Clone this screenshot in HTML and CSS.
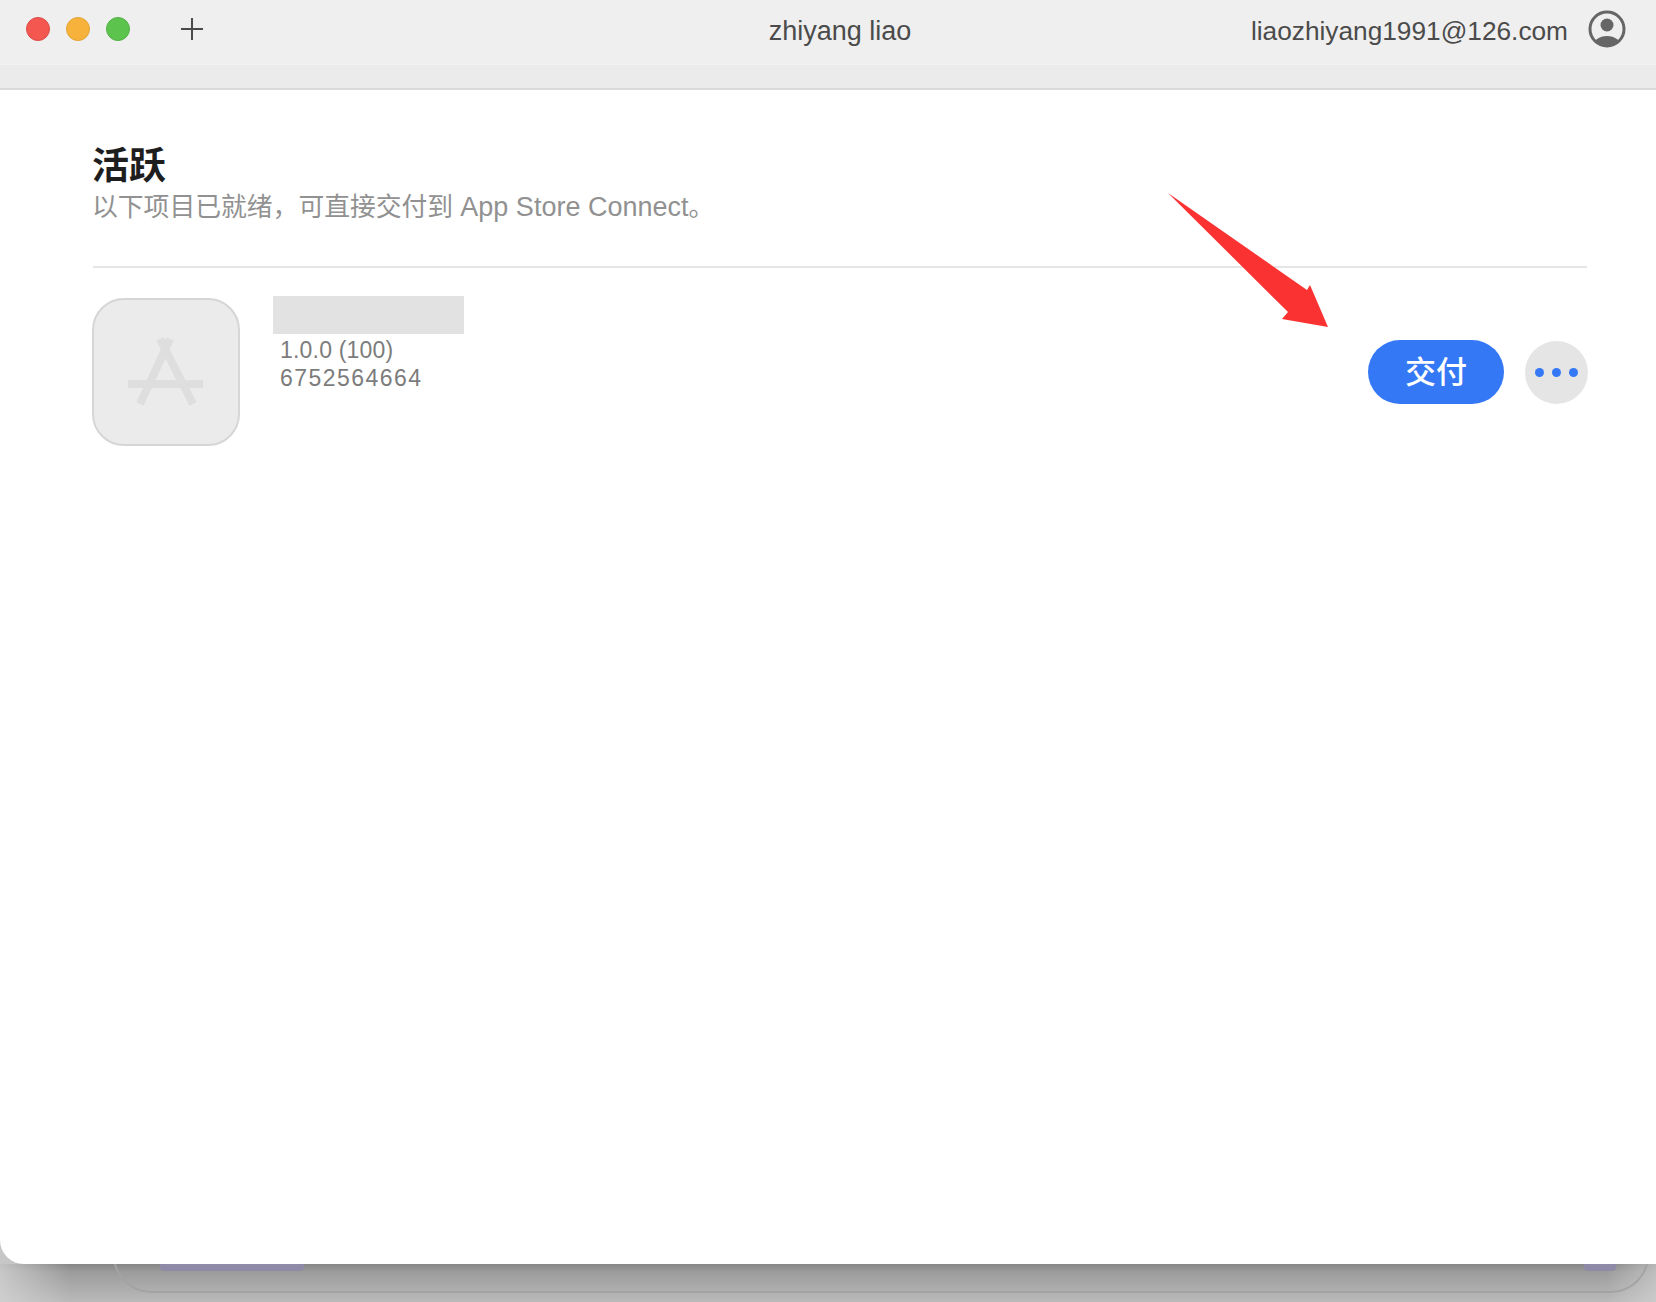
FILE: index.html
```html
<!DOCTYPE html>
<html lang="zh">
<head>
<meta charset="utf-8">
<title>zhiyang liao</title>
<link rel="stylesheet" href="styles.css">
</head>
<body>
<div class="screen">
  <main class="window">
    <header class="titlebar">
      <div class="title-left">
        <div class="lights">
          <span class="light light-red"></span>
          <span class="light light-yellow"></span>
          <span class="light light-green"></span>
        </div>
        <svg class="plus" viewBox="0 0 24 24" width="24" height="24"><path d="M12 1v22M1 12h22"/></svg>
      </div>
      <div class="title-name">zhiyang liao</div>
      <div class="title-right">
        <span class="email">liaozhiyang1991@126.com</span>
        <svg class="avatar" viewBox="0 0 38 38" width="38" height="38">
          <defs><clipPath id="avatar-clip"><circle cx="19" cy="19" r="17"/></clipPath></defs>
          <circle class="avatar-ring" cx="19" cy="19" r="17"/>
          <circle class="avatar-fill" cx="19" cy="15" r="6.5"/>
          <ellipse class="avatar-fill" clip-path="url(#avatar-clip)" cx="19" cy="36" rx="14" ry="10"/>
        </svg>
      </div>
    </header>
    <div class="toolbar-strip"></div>
    <section class="content">
      <h1 class="heading">活跃</h1>
      <p class="subtitle">以下项目已就绪，可直接交付到 <span class="subtitle-latin">App Store Connect</span>。</p>
      <hr class="divider">
      <div class="app-row">
        <div class="app-icon">
          <svg viewBox="0 0 148 148" width="148" height="148">
            <path class="app-glyph" d="M36 86h75M78 41 48 106M68 41l33 65"/>
          </svg>
        </div>
        <div class="app-info">
          <div class="app-name"></div>
          <div class="app-meta app-version">1.0.0 (100)</div>
          <div class="app-meta app-id">6752564664</div>
        </div>
        <div class="app-actions">
          <button class="deliver">交付</button>
          <button class="more"><span class="dot"></span><span class="dot"></span><span class="dot"></span></button>
        </div>
      </div>
      <svg class="arrow" viewBox="0 0 170 145" width="170" height="145">
        <path d="M2 2 141 99 144 94 162 136 116 128 122 121Z"/>
      </svg>
    </section>
  </main>
  <footer class="desk">
    <span class="peek peek-left"></span>
    <span class="peek peek-right"></span>
    <div class="back-window"></div>
  </footer>
</div>
</body>
</html>
```
FILE: styles.css
```css
* { box-sizing: border-box; }
html, body { margin: 0; padding: 0; height: 100%; }
body {
  font-family: "Liberation Sans", "Noto Sans CJK SC", sans-serif;
  background: #b8b8b8;
  overflow: hidden;
}
.screen {
  width: 1656px;
  height: 1302px;
  display: flex;
  flex-direction: column;
  background: #c6c6c6;
}
.window {
  height: 1264px;
  display: flex;
  flex-direction: column;
  background: #fff;
  border-bottom-left-radius: 24px;
  position: relative;
  z-index: 2;
  overflow: hidden;
}
.titlebar {
  height: 64px;
  background: #efefef;
  display: grid;
  grid-template-columns: minmax(0, 1fr) auto minmax(0, 1fr);
  align-items: center;
}
.title-left {
  display: flex;
  align-items: center;
  padding-left: 26px;
  gap: 50px;
  margin-top: -6px;
}
.lights { display: flex; gap: 16px; }
.light { width: 24px; height: 24px; border-radius: 50%; display: block; }
.light-red { background: #f4574f; border: 1px solid #dc4c48; }
.light-yellow { background: #f6b23a; border: 1px solid #e2a437; }
.light-green { background: #5cc44c; border: 1px solid #52b045; }
.plus { fill: none; stroke: #4a4a4a; stroke-width: 2; }
.title-name {
  font-size: 27px;
  color: #4b4b4b;
  line-height: 30px;
  margin-top: -2px;
  margin-left: 24px;
}
.title-right {
  display: flex;
  justify-content: flex-end;
  align-items: center;
  gap: 20px;
  padding-right: 30px;
  margin-top: -6px;
}
.email { font-size: 26.25px; color: #4b4b4b; line-height: 30px; margin-top: 4px; }
.avatar { display: block; }
.avatar-ring { fill: none; stroke: #666; stroke-width: 3; }
.avatar-fill { fill: #666; }
.toolbar-strip {
  height: 26px;
  background: #ebebeb;
  border-top: 1px solid #f2f2f2;
  border-bottom: 2px solid #d9d9d9;
}
.content {
  flex: 1;
  padding: 58px 69px 0 93px;
  position: relative;
}
.heading {
  margin: 0 0 0 -1px;
  font-size: 37px;
  line-height: 38px;
  font-weight: 700;
  color: #1e1e1e;
}
.subtitle {
  margin: 4px 0 0 -1px;
  font-size: 25.8px;
  line-height: 34px;
  color: #919191;
}
.subtitle-latin { font-size: 27px; }
.divider {
  margin: 42px 0 0;
  border: 0;
  height: 2px;
  background: #e5e5e5;
}
.app-row {
  display: flex;
  margin-top: 28px;
  align-items: flex-start;
}
.app-icon {
  width: 148px;
  height: 148px;
  margin-left: -1px;
  margin-top: 2px;
  background: #ebebeb;
  border: 2px solid #d6d6d6;
  border-radius: 32px;
  display: flex;
  align-items: center;
  justify-content: center;
  overflow: hidden;
  flex: none;
}
.app-icon svg { flex: none; }
.app-glyph { fill: none; stroke: #dedede; stroke-width: 8; }
.app-info { margin-left: 33px; flex: 1; }
.app-name { width: 191px; height: 38px; background: #e2e2e2; margin-bottom: 2px; }
.app-meta {
  font-size: 23px;
  line-height: 28px;
  color: #7c7c7c;
  padding-left: 7px;
}
.app-version { letter-spacing: 0.2px; }
.app-id { letter-spacing: 1.45px; }
.app-actions {
  display: flex;
  align-items: center;
  gap: 21px;
  margin-top: 44px;
  margin-right: -1px;
}
.deliver {
  width: 136px;
  height: 64px;
  border: 0;
  border-radius: 32px;
  background: #3478f6;
  color: #fff;
  font: 500 31px/1 "Noto Sans CJK SC", sans-serif;
  padding: 0 0 5px;
}
.more {
  width: 63px;
  height: 63px;
  border: 0;
  border-radius: 50%;
  background: #e5e5e5;
  display: flex;
  align-items: center;
  justify-content: center;
  gap: 8px;
  padding: 0;
}
.dot { width: 9px; height: 9px; border-radius: 50%; background: #3478f6; display: block; }
.arrow {
  position: absolute;
  left: 1166px;
  top: 101px;
  fill: #fb3232;
}
.desk {
  flex: 1;
  position: relative;
  overflow: hidden;
  background:
    linear-gradient(to right, rgba(214, 214, 214, .75), rgba(214, 214, 214, 0) 70px),
    linear-gradient(to left, rgba(214, 214, 214, .6), rgba(214, 214, 214, 0) 50px),
    linear-gradient(#868686 0, #9c9c9c 8px, #aeaeae 26px, #bababa 100%);
}
.peek {
  position: absolute;
  top: 0;
  height: 7px;
  background: #8f8aa8;
  border-radius: 0 0 4px 4px;
}
.peek-left { left: 160px; width: 144px; }
.peek-right { left: 1584px; width: 32px; }
.back-window {
  position: absolute;
  left: 113px;
  right: 7px;
  top: -24px;
  height: 53px;
  border: 2px solid #a3a3a3;
  border-top: 0;
  border-radius: 0 0 38px 38px;
}
```
